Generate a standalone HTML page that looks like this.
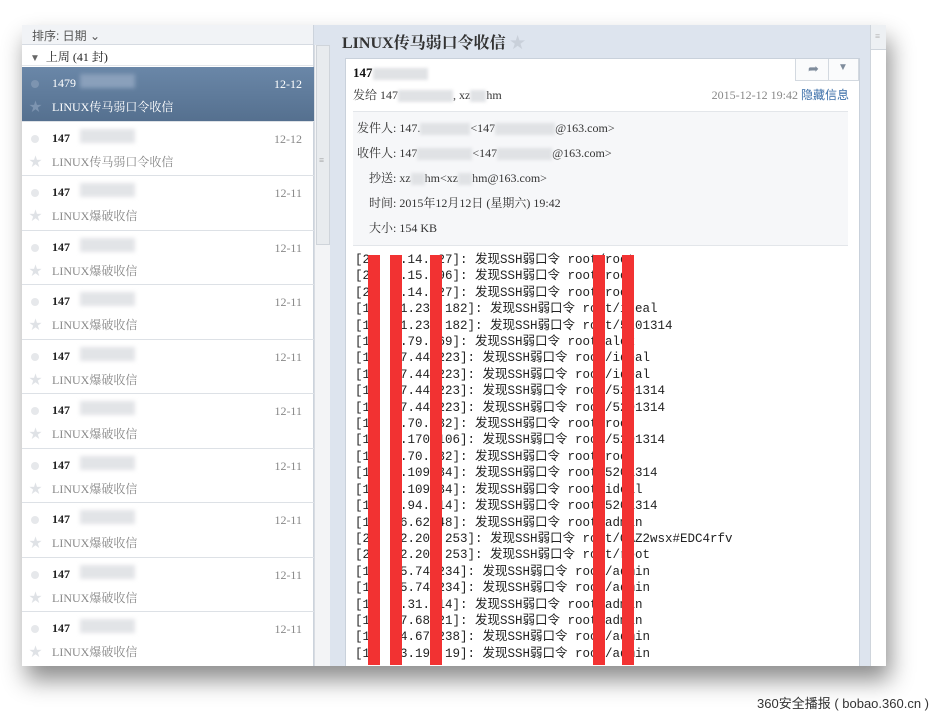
<!DOCTYPE html>
<html><head><meta charset="utf-8"><style>
*{margin:0;padding:0;box-sizing:border-box}
body{width:941px;height:722px;background:#fff;position:relative;overflow:hidden;font-family:"Liberation Serif","Noto Serif CJK SC","Noto Sans CJK SC",serif}
.shot{position:absolute;left:22px;top:25px;width:864px;height:641px;background:#dde4ee;box-shadow:4px 14px 22px rgba(0,0,0,.45);overflow:hidden}
.left{position:absolute;left:0;top:0;width:292px;height:641px;background:#fff;border-right:1px solid #ccd3dc}
.sort{height:20px;background:#f1f3f6;border-bottom:1px solid #d6dbe2;font:12px "Liberation Sans","Noto Sans CJK SC",sans-serif;color:#555;padding:2px 10px}
.grp{height:21px;font-size:12px;padding:3px 8px;color:#222;border-bottom:1px solid #e3e6ea}
.row{position:absolute;left:0;width:292px;height:54.5px;border-bottom:1px solid #dde1e6;font-size:12px;color:#999}
.row .n{position:absolute;left:30px;top:9px;color:#222;font-weight:bold}
.row .d{position:absolute;right:12px;top:10px;color:#888}
.row .s{position:absolute;left:30px;top:31px;color:#888}
.row .dot{position:absolute;left:9px;top:13px;width:8px;height:8px;border-radius:50%;background:#e6e8eb}
.row .st{position:absolute;left:7px;top:29px;color:#dfe2e6;font-size:13px}
.row .blur{position:absolute;left:58px;top:7px;width:55px;height:14px;background:#e2e4e7;filter:blur(2px)}
.sel{background:linear-gradient(#6a87a8,#55708f);color:#fff}
.sel .n,.sel .d,.sel .s{color:#fff;font-weight:normal}
.sel .blur{background:#8aa0bb}
.sel .dot{background:#7d94b0}.sel .st{color:#7d94b0}
.lsb{position:absolute;left:292px;top:20px;width:16px;height:621px;background:#f3f4f6;border-left:1px solid #d8dce2}
.lsb div{position:absolute;left:1px;top:0;width:14px;height:200px;background:#e8ebee;border:1px solid #cfd4da}
.right{position:absolute;left:310px;top:0;width:554px;height:641px;background:#dde4ee}
.title{position:absolute;left:10px;top:5px;font-size:16px;font-weight:bold;color:#333}
.box{position:absolute;left:13px;top:33px;width:515px;height:620px;background:#fff;border:1px solid #c9d1db}
.rsb{position:absolute;left:538px;top:0;width:16px;height:641px;background:#fff;border-left:1px solid #cfd5dc}
.rsb div{position:absolute;left:0;top:0;width:15px;height:25px;background:#edf0f3;border-bottom:1px solid #cfd5dc}
.mono{font-family:"Liberation Mono","Noto Sans CJK SC",monospace}
.info{position:absolute;left:7px;top:52px;width:495px;height:135px;background:#f6f7f9;border-top:1px solid #e3e6ea;border-bottom:1px solid #e3e6ea;font-size:12px;color:#333}
.info p{position:absolute;white-space:nowrap}
.body{position:absolute;left:9px;top:193px;font-size:12.5px;line-height:16.4px;color:#222;white-space:pre}
.red{position:absolute;top:196px;width:12px;height:410px;background:#f23232}
.bl{display:inline-block;background:#e0e2e5;height:12px;vertical-align:middle;filter:blur(1.5px)}
</style></head><body>
<div class="shot">
 <div class="left">
  <div class="sort">排序: 日期 ⌄</div>
  <div class="grp"><span style="color:#666;font-size:10px">▼</span>&nbsp; 上周 (41 封)</div>
  <div class="row sel" style="top:42px"><span class="dot"></span><span class="n">1479</span><span class="blur"></span><span class="d">12-12</span><span class="st">★</span><span class="s">LINUX传马弱口令收信</span></div>
  <div class="row" style="top:96.5px"><span class="dot"></span><span class="n">147</span><span class="blur"></span><span class="d">12-12</span><span class="st">★</span><span class="s">LINUX传马弱口令收信</span></div>
  <div class="row" style="top:151px"><span class="dot"></span><span class="n">147</span><span class="blur"></span><span class="d">12-11</span><span class="st">★</span><span class="s">LINUX爆破收信</span></div>
  <div class="row" style="top:205.5px"><span class="dot"></span><span class="n">147</span><span class="blur"></span><span class="d">12-11</span><span class="st">★</span><span class="s">LINUX爆破收信</span></div>
  <div class="row" style="top:260px"><span class="dot"></span><span class="n">147</span><span class="blur"></span><span class="d">12-11</span><span class="st">★</span><span class="s">LINUX爆破收信</span></div>
  <div class="row" style="top:314.5px"><span class="dot"></span><span class="n">147</span><span class="blur"></span><span class="d">12-11</span><span class="st">★</span><span class="s">LINUX爆破收信</span></div>
  <div class="row" style="top:369px"><span class="dot"></span><span class="n">147</span><span class="blur"></span><span class="d">12-11</span><span class="st">★</span><span class="s">LINUX爆破收信</span></div>
  <div class="row" style="top:423.5px"><span class="dot"></span><span class="n">147</span><span class="blur"></span><span class="d">12-11</span><span class="st">★</span><span class="s">LINUX爆破收信</span></div>
  <div class="row" style="top:478px"><span class="dot"></span><span class="n">147</span><span class="blur"></span><span class="d">12-11</span><span class="st">★</span><span class="s">LINUX爆破收信</span></div>
  <div class="row" style="top:532.5px"><span class="dot"></span><span class="n">147</span><span class="blur"></span><span class="d">12-11</span><span class="st">★</span><span class="s">LINUX爆破收信</span></div>
  <div class="row" style="top:587px"><span class="dot"></span><span class="n">147</span><span class="blur"></span><span class="d">12-11</span><span class="st">★</span><span class="s">LINUX爆破收信</span></div>
 </div>
 <div class="lsb"><div></div><span style="position:absolute;left:4px;top:110px;font-size:9px;color:#999">≡</span></div>
 <div class="right">
  <div class="title">LINUX传马弱口令收信 <span style="color:#c9d0da">★</span></div>
  <div class="box">
   <div style="position:absolute;left:7px;top:6px;font-size:13px;font-weight:bold;color:#111">147<span class="bl" style="width:55px"></span></div>
   <div style="position:absolute;right:0;top:0;width:64px;height:22px;border:1px solid #d3d9e0;border-top:0;background:#fafbfc;color:#7f8c9c;font-size:13px"><span style="position:absolute;left:12px;top:2px">➦</span><span style="position:absolute;left:32px;top:0;height:21px;border-left:1px solid #d3d9e0"></span><span style="position:absolute;left:42px;top:3px;font-size:10px">▼</span></div>
   <div style="position:absolute;left:7px;top:27px;font-size:12px;color:#333;white-space:nowrap">发给 147<span class="bl" style="width:55px"></span>, xz<span class="bl" style="width:16px"></span>hm</div>
   <div style="position:absolute;right:10px;top:27px;font-size:12px;color:#888;white-space:nowrap">2015-12-12 19:42 <span style="color:#3a6ea8;font-family:'Liberation Sans','Noto Sans CJK SC',sans-serif">隐藏信息</span></div>
   <div class="info">
    <p style="left:4px;top:7px">发件人: 147.<span class="bl" style="width:50px"></span>&lt;147<span class="bl" style="width:60px"></span>@163.com&gt;</p>
    <p style="left:4px;top:32px">收件人: 147<span class="bl" style="width:55px"></span>&lt;147<span class="bl" style="width:55px"></span>@163.com&gt;</p>
    <p style="left:16px;top:57px">抄送: xz<span class="bl" style="width:14px"></span>hm&lt;xz<span class="bl" style="width:14px"></span>hm@163.com&gt;</p>
    <p style="left:16px;top:82px">时间: 2015年12月12日 (星期六) 19:42</p>
    <p style="left:16px;top:107px">大小: 154 KB</p>
   </div>
<div class="body mono">[2    .14. 27]: 发现SSH弱口令 root/root
[2    .15. 96]: 发现SSH弱口令 root/root
[2    .14. 27]: 发现SSH弱口令 root/root
[1    1.23  182]: 发现SSH弱口令 root/ideal
[1    1.23  182]: 发现SSH弱口令 root/5201314
[1    .79. 69]: 发现SSH弱口令 root/alex
[1    7.44 223]: 发现SSH弱口令 root/ideal
[1    7.44 223]: 发现SSH弱口令 root/ideal
[1    7.44 223]: 发现SSH弱口令 root/5201314
[1    7.44 223]: 发现SSH弱口令 root/5201314
[1    .70. 32]: 发现SSH弱口令 root/root
[1    .170 106]: 发现SSH弱口令 root/5201314
[1    .70. 32]: 发现SSH弱口令 root/root
[1    .109 34]: 发现SSH弱口令 root/5201314
[1    .109 34]: 发现SSH弱口令 root/ideal
[1    .94. 14]: 发现SSH弱口令 root/5201314
[1    6.62 48]: 发现SSH弱口令 root/admin
[2    2.20  253]: 发现SSH弱口令 root/QAZ2wsx#EDC4rfv
[2    2.20  253]: 发现SSH弱口令 root/root
[1    5.74 234]: 发现SSH弱口令 root/admin
[1    5.74 234]: 发现SSH弱口令 root/admin
[1    .31. 14]: 发现SSH弱口令 root/admin
[1    7.68 21]: 发现SSH弱口令 root/admin
[1    4.67 238]: 发现SSH弱口令 root/admin
[1    3.19  19]: 发现SSH弱口令 root/admin</div>
   <div class="red" style="left:22px"></div>
   <div class="red" style="left:44px"></div>
   <div class="red" style="left:84px"></div>
   <div class="red" style="left:247px"></div>
   <div class="red" style="left:276px"></div>
  </div>
  <div class="rsb"><div><span style="position:absolute;left:4px;top:6px;font-size:9px;color:#aaa">≡</span></div></div>
 </div>
</div>
<div style="position:absolute;right:12px;top:693px;font:13px 'Liberation Sans','Noto Sans CJK SC',sans-serif;color:#333">360安全播报 ( bobao.360.cn )</div>
</body></html>
